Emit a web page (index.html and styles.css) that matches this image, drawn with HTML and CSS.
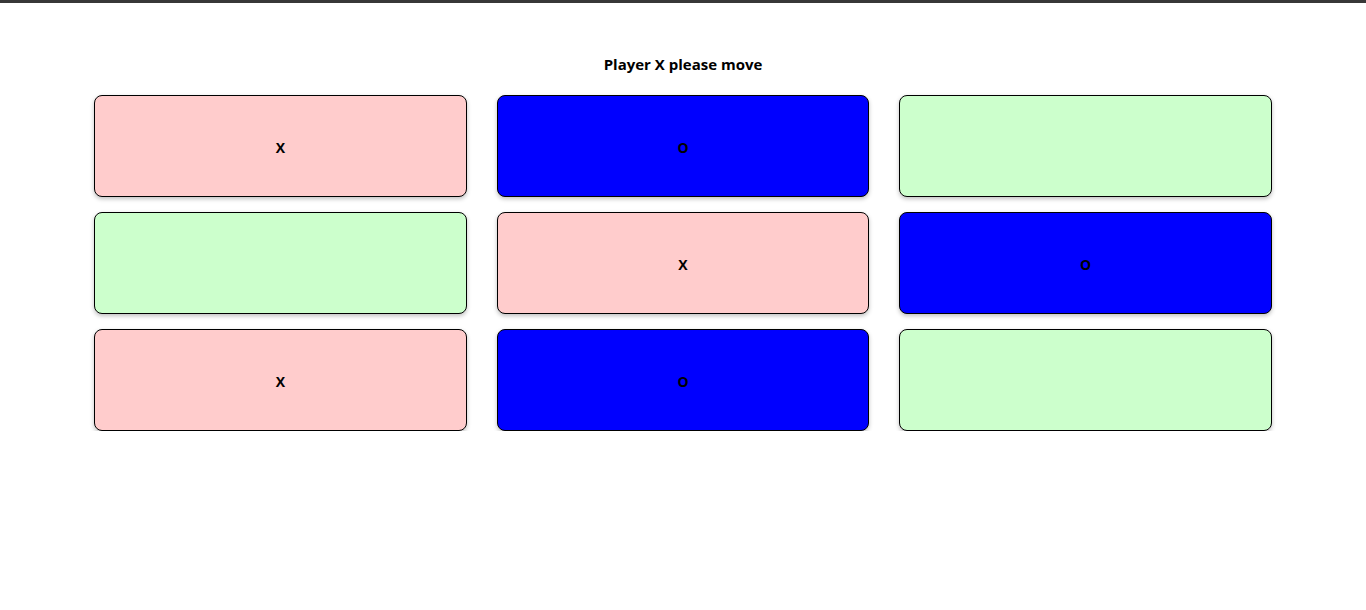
FILE: index.html
```html
<!DOCTYPE html>
<html>
<head>
<meta charset="utf-8">
<link rel="stylesheet" href="styles.css">
</head>
<body>
<div class="topbar"></div>
<main class="game">
  <h1 class="status">Player X please move</h1>
  <div class="board">
    <div class="cell x">X</div>
    <div class="cell o">O</div>
    <div class="cell empty"></div>
    <div class="cell empty"></div>
    <div class="cell x">X</div>
    <div class="cell o">O</div>
    <div class="cell x">X</div>
    <div class="cell o">O</div>
    <div class="cell empty"></div>
  </div>
</main>
</body>
</html>
```
FILE: styles.css
```css
html, body {
  margin: 0;
  padding: 0;
  background: #ffffff;
}
body {
  font-family: "Open Sans", "Noto Sans", "Liberation Sans", sans-serif;
  color: #000;
}
.topbar {
  height: 3px;
  background: #383838;
}
.game {
  width: 1178px;
  margin: 0 auto;
  padding-top: 51px;
}
.status {
  margin: 0 0 21px;
  font-size: 15px;
  line-height: 20px;
  font-weight: 700;
  text-align: center;
}
.board {
  display: grid;
  grid-template-columns: repeat(3, 1fr);
  grid-auto-rows: 102px;
  column-gap: 30px;
  row-gap: 15px;
}
.cell {
  box-sizing: border-box;
  border: 1px solid #000;
  border-radius: 8px;
  box-shadow: 0 2px 4px rgba(0, 0, 0, 0.25);
  display: flex;
  align-items: center;
  justify-content: center;
  padding-top: 2px;
  font-size: 14px;
  font-weight: 700;
}
.x { background: #ffcccc; }
.o { background: #0000ff; }
.empty { background: #ccffcc; }
```
